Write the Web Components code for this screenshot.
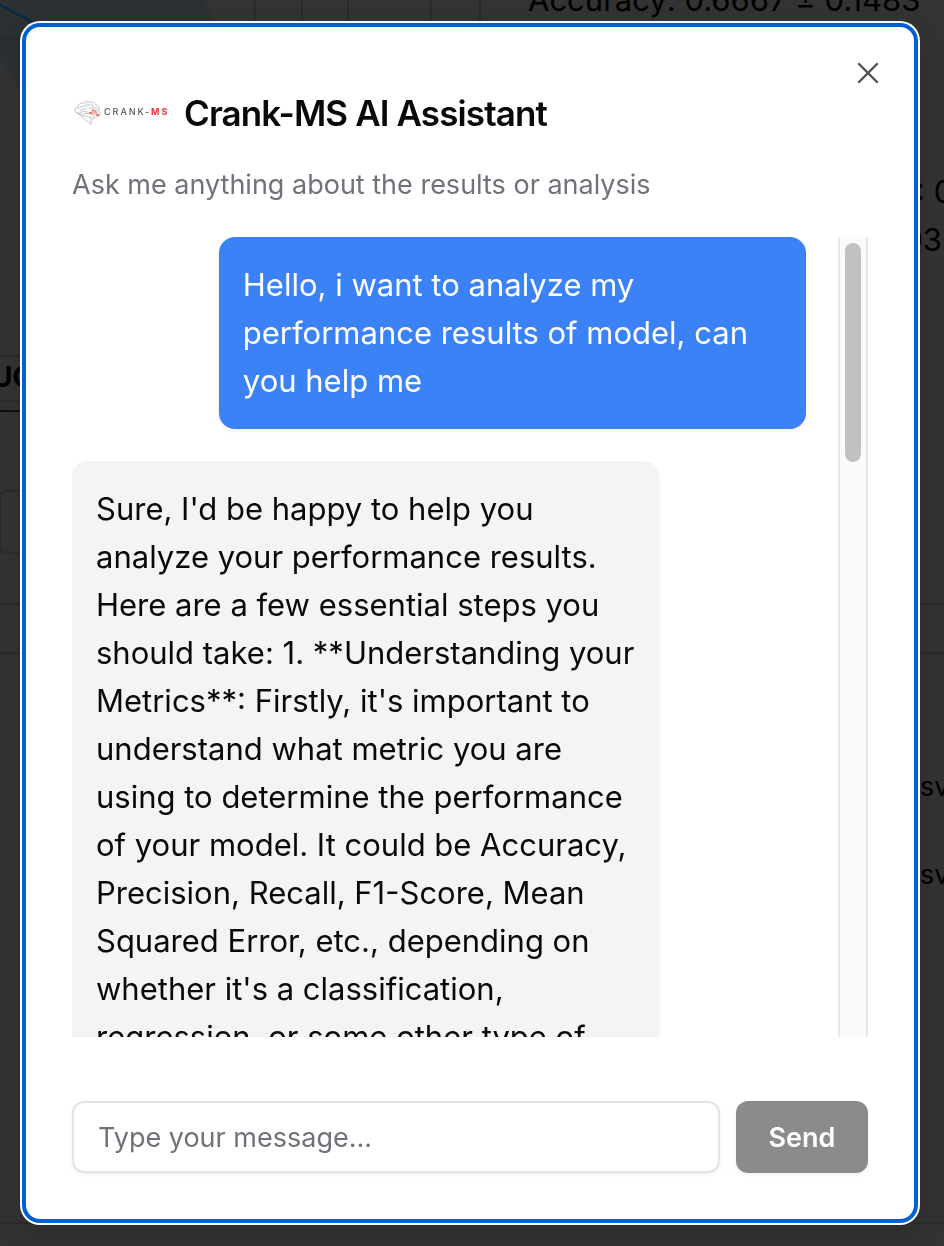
<!DOCTYPE html>
<html lang="en">
<head>
<meta charset="utf-8">
<title>Crank-MS AI Assistant</title>
<style>
html, body { margin: 0; height: 100%; }
body { font-family: Inter, "Liberation Sans", sans-serif; color: #09090b; background: #333; overflow: hidden; }
</style>
</head>
<body>
<results-page></results-page>
<chat-dialog>
  <brand-logo slot="logo"></brand-logo>
  <span slot="title">Crank-MS AI Assistant</span>
  <span slot="description">Ask me anything about the results or analysis</span>
  <chat-message from="user">Hello, i want to analyze my
performance results of model, can
you help me</chat-message>
  <chat-message from="assistant">Sure, I'd be happy to help you
analyze your performance results.
Here are a few essential steps you
should take: 1. **Understanding your
Metrics**: Firstly, it's important to
understand what metric you are
using to determine the performance
of your model. It could be Accuracy,
Precision, Recall, F1-Score, Mean
Squared Error, etc., depending on
whether it's a classification,
regression, or some other type of</chat-message>
  <chat-composer slot="footer"></chat-composer>
</chat-dialog>
<script>
class BaseElement extends HTMLElement {
  constructor() {
    super();
    this.attachShadow({ mode: 'open' }).innerHTML = this.constructor.markup.trim();
  }
}

customElements.define('results-page', class extends BaseElement {
  static markup = `
    <style>
      :host { display: grid; grid-template-columns: 1fr 416px; height: 100%; background: #333; color: #000; overflow: hidden; }
      svg { grid-area: 1 / 1 / 2 / 3; width: 100%; height: 1246px; }
      .left { grid-area: 1 / 1; margin-left: -8px; padding-top: 361px; font-weight: 700; font-size: 28px; line-height: 32px; }
      .right { grid-area: 1 / 2; font-size: 31px; line-height: 48px; white-space: nowrap; }
      p { margin: 0; }
      .accuracy { margin-top: -24px; }
      .value { padding-left: 388px; }
      .value.last { padding: 0 2px 0 0; text-align: right; }
      .first { margin-top: 144px; }
      .files { margin-top: 499px; padding-left: 392px; font-size: 27px; line-height: 48px; display: grid; gap: 40px; }
    </style>
    <svg aria-hidden="true">
      <path d="M0 0H205L230 65V150H66L0 60Z" fill="#2b3133"/>
      <path d="M0 5L34 23" stroke="#082b42" stroke-width="2"/>
      <g stroke="#2b2b2b" stroke-width="2">
        <path d="M255 0V24M302 0V24M348 0V24M431 0V24M480 0V24M0 39H22M0 356H22M0 401H22M0 604H22M0 653H22M918 604H944M918 653H944"/>
        <path d="M22 491H6Q0 491 0 498V545Q0 553 6 553H22M0 1223H944" fill="none"/>
      </g>
      <path d="M0 411H22" stroke="#111" stroke-width="2"/>
    </svg>
    <div class="left">UC</div>
    <div class="right">
      <p class="accuracy">Accuracy: 0.6667 ± 0.1483</p>
      <p class="value first">: 0</p>
      <p class="value last">93</p>
      <div class="files"><span>sv</span><span>sv</span></div>
    </div>`;
});

customElements.define('brand-logo', class extends BaseElement {
  static markup = `
    <style>
      :host { display: flex; align-items: center; gap: 2px; width: 96px; height: 32px; font: 500 9px/12px Inter, sans-serif; letter-spacing: 2px; color: #555; white-space: nowrap; }
      svg { width: 30px; height: 26px; flex: none; }
      span { padding-bottom: 2px; }
      b { color: #ef3340; font-weight: 700; }
    </style>
    <svg viewBox="-2 0 30 26" fill="none" stroke="#aaa" stroke-width=".7" stroke-linecap="round" aria-hidden="true">
      <path d="M3 13Q0 12 1 9Q2 7 4 7Q4 3 9 3Q12 0 16 2Q20 1 22 5Q26 6 25 10Q28 13 25 16Q22 18 19 17V20M17 24V17Q14 18 12 16Q8 17 7 14Q4 15 3 13Z"/>
      <path d="M4 9Q5 6 9 7Q10 5 14 6M6 11Q9 8 13 9M5 13Q9 10 14 12M9 14Q12 12 15 14M11 4Q15 3 17 6M18 4Q20 6 19 8M20 8Q24 7 24 11M15 8Q18 7 20 10M22 12Q24 13 23 15"/>
      <path d="M16 13H18V10H20V15M22 11V15H24M18 15V13M21 12V10" stroke="#ef4b4b"/>
      <circle cx="16" cy="13" r=".7" stroke="#ef4b4b"/><circle cx="24" cy="15" r=".7" stroke="#ef4b4b"/>
    </svg>
    <span>CRANK-<b>MS</b></span>`;
});

customElements.define('chat-message', class extends BaseElement {
  static markup = `
    <style>
      :host { display: block; box-sizing: border-box; width: 80%; flex: none; padding: 24px; border-radius: 16px; font-size: 31px; line-height: 48px; background: #f3f4f6; box-shadow: 0 2px 4px rgb(0 0 0 / 6%); }
      :host([from="user"]) { align-self: flex-end; background: #3b82f6; color: #fff; }
      .text { white-space: pre-line; }
    </style>
    <div class="text"><slot></slot></div>`;
});

customElements.define('chat-composer', class extends BaseElement {
  static markup = `
    <style>
      :host { display: block; }
      form { display: flex; gap: 16px; height: 72px; }
      input, button { box-sizing: border-box; font: inherit; font-size: 27px; border-radius: 12px; box-shadow: 0 2px 4px rgb(0 0 0 / 6%); }
      input { flex: 1; min-width: 0; padding: 0 24px; border: 2px solid #e4e4e7; background: #fff; color: #09090b; outline: 0; }
      input::placeholder { color: #71717a; opacity: 1; }
      button { width: 132px; padding: 0; border: 0; background: #8b8b8d; color: #fff; font-weight: 600; }
    </style>
    <form onsubmit="return false">
      <input type="text" aria-label="Message" placeholder="Type your message...">
      <button type="submit">Send</button>
    </form>`;
});

customElements.define('chat-dialog', class extends BaseElement {
  static markup = `
    <style>
      :host { position: fixed; inset: 23px 26px 23px 22px; display: flex; flex-direction: column; box-sizing: border-box; padding: 62px 46px 46px; border: 4px solid #0060d1; border-radius: 18px; background: #fff; box-shadow: 0 0 0 2px #fff, 0 12px 24px 4px rgb(0 0 0 / 12%); }
      header { display: flex; align-items: center; gap: 16px; height: 48px; }
      h2 { margin: 0; font-size: 35px; line-height: 48px; font-weight: 600; letter-spacing: -0.025em; white-space: nowrap; }
      .description { margin: 28px 0 32px; font-size: 27px; line-height: 40px; color: #71717a; white-space: nowrap; }
      .viewport { flex: 1; min-height: 0; display: flex; gap: 32px; overflow: hidden; }
      .messages { flex: 1; min-width: 0; display: flex; flex-direction: column; gap: 32px; }
      .track { box-sizing: border-box; width: 30px; padding: 6px 0; border: solid #e8e8e8; border-width: 0 2px; background: #fafafa; }
      .thumb { width: 16px; height: 219px; border-radius: 8px; background: #c1c1c1; margin: 0 auto; }
      footer { margin-top: 64px; }
      .close { position: absolute; top: 30px; right: 30px; width: 32px; height: 32px; padding: 0; border: 0; background: none; color: #505052; }
      .close svg { display: block; width: 32px; height: 32px; }
    </style>
    <header><slot name="logo"></slot><h2><slot name="title"></slot></h2></header>
    <div class="description"><slot name="description"></slot></div>
    <div class="viewport">
      <div class="messages"><slot></slot></div>
      <div class="track"><div class="thumb"></div></div>
    </div>
    <footer><slot name="footer"></slot></footer>
    <button class="close" type="button" aria-label="Close">
      <svg viewBox="0 0 32 32" fill="none" stroke="currentColor" stroke-width="2.4" stroke-linecap="round"><path d="M7 7L25 25M25 7L7 25"/></svg>
    </button>`;
});
</script>
</body>
</html>
